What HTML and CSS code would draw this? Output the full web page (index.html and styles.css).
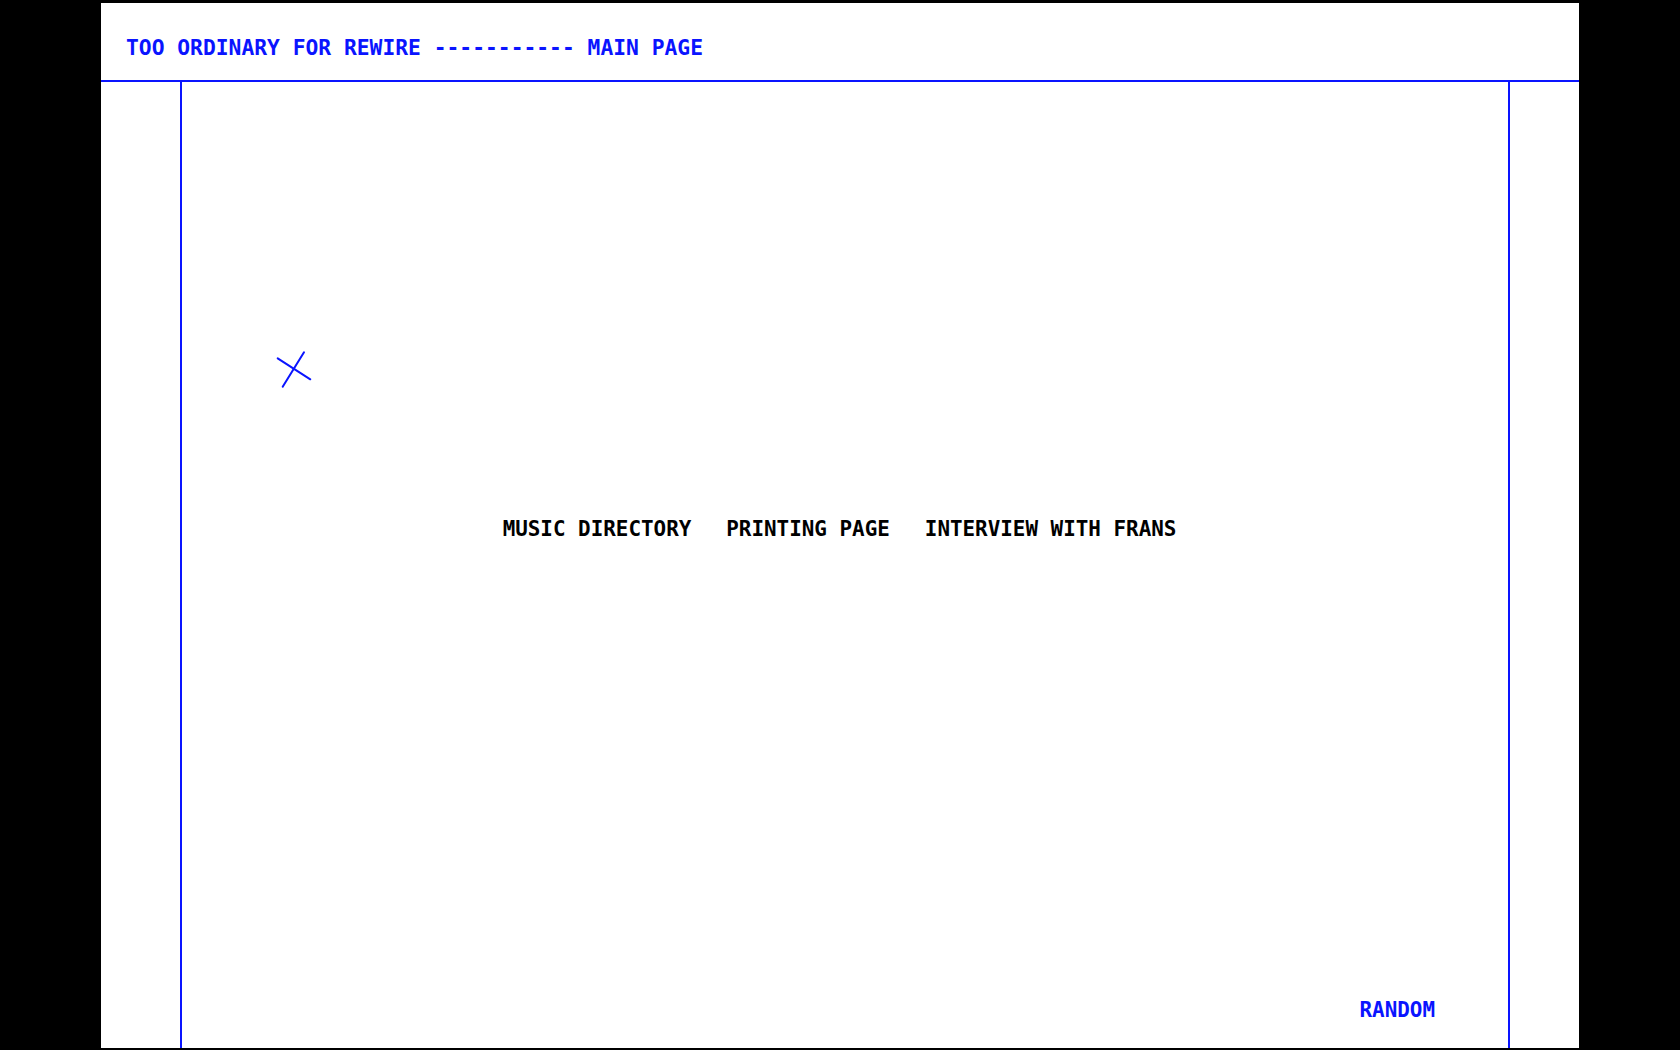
FILE: index.html
```html
<!DOCTYPE html>
<html lang="en">
<head>
<meta charset="utf-8">
<title>Too Ordinary for Rewire</title>
<link rel="stylesheet" href="styles.css">
</head>
<body>
<div class="page">
  <header class="top">
    <span class="crumb">TOO ORDINARY FOR REWIRE ----------- MAIN PAGE</span>
  </header>
  <div class="frame">
    <div class="side side-left"></div>
    <main class="stage">
      <svg class="cross" width="50" height="50" viewBox="0 0 50 50" aria-hidden="true">
        <line x1="7.7" y1="13.3" x2="40.3" y2="34.3"/>
        <line x1="34" y1="7.3" x2="12.7" y2="41.7"/>
      </svg>
      <nav class="links">
        <a class="link" href="#">MUSIC DIRECTORY</a>
        <a class="link" href="#">PRINTING PAGE</a>
        <a class="link" href="#">INTERVIEW WITH FRANS</a>
      </nav>
      <a class="random" href="#">RANDOM</a>
    </main>
    <div class="side side-right"></div>
  </div>
</div>
</body>
</html>
```

FILE: styles.css
```css
html, body {
  margin: 0;
  padding: 0;
  background: #000;
  overflow: hidden;
}

body {
  padding-top: 3px;
  height: 1050px;
  box-sizing: border-box;
}

.page {
  width: 1478px;
  height: 1045px;
  margin: 0 auto;
  background: #fff;
  display: flex;
  flex-direction: column;
  font-family: "DejaVu Sans Mono", "Liberation Mono", monospace;
  font-weight: bold;
}

.top {
  height: 79px;
  box-sizing: border-box;
  padding: 32px 0 0 25px;
  border-bottom: 2px solid #0a14ff;
  line-height: 25px;
}

.crumb {
  color: #0a14ff;
  font-size: 21.3px;
}

.frame {
  flex: 1;
  display: grid;
  grid-template-columns: 79px 1fr 69px;
}

.stage {
  position: relative;
  border-left: 2px solid #0a14ff;
  border-right: 2px solid #0a14ff;
  display: flex;
  flex-direction: column;
}

.cross {
  position: absolute;
  left: 88px;
  top: 263px;
}

.cross line {
  stroke: #0a14ff;
  stroke-width: 2;
  stroke-linecap: round;
}

.links {
  margin-top: 435px;
  display: flex;
  justify-content: center;
  gap: 35px;
  padding-right: 11px;
  line-height: 24px;
}

.link {
  color: #000;
  text-decoration: none;
  font-size: 20.9px;
}

.random {
  margin-top: auto;
  align-self: flex-end;
  margin-right: 73px;
  margin-bottom: 26px;
  color: #0a14ff;
  text-decoration: none;
  font-size: 20.9px;
  line-height: 24px;
}
```
